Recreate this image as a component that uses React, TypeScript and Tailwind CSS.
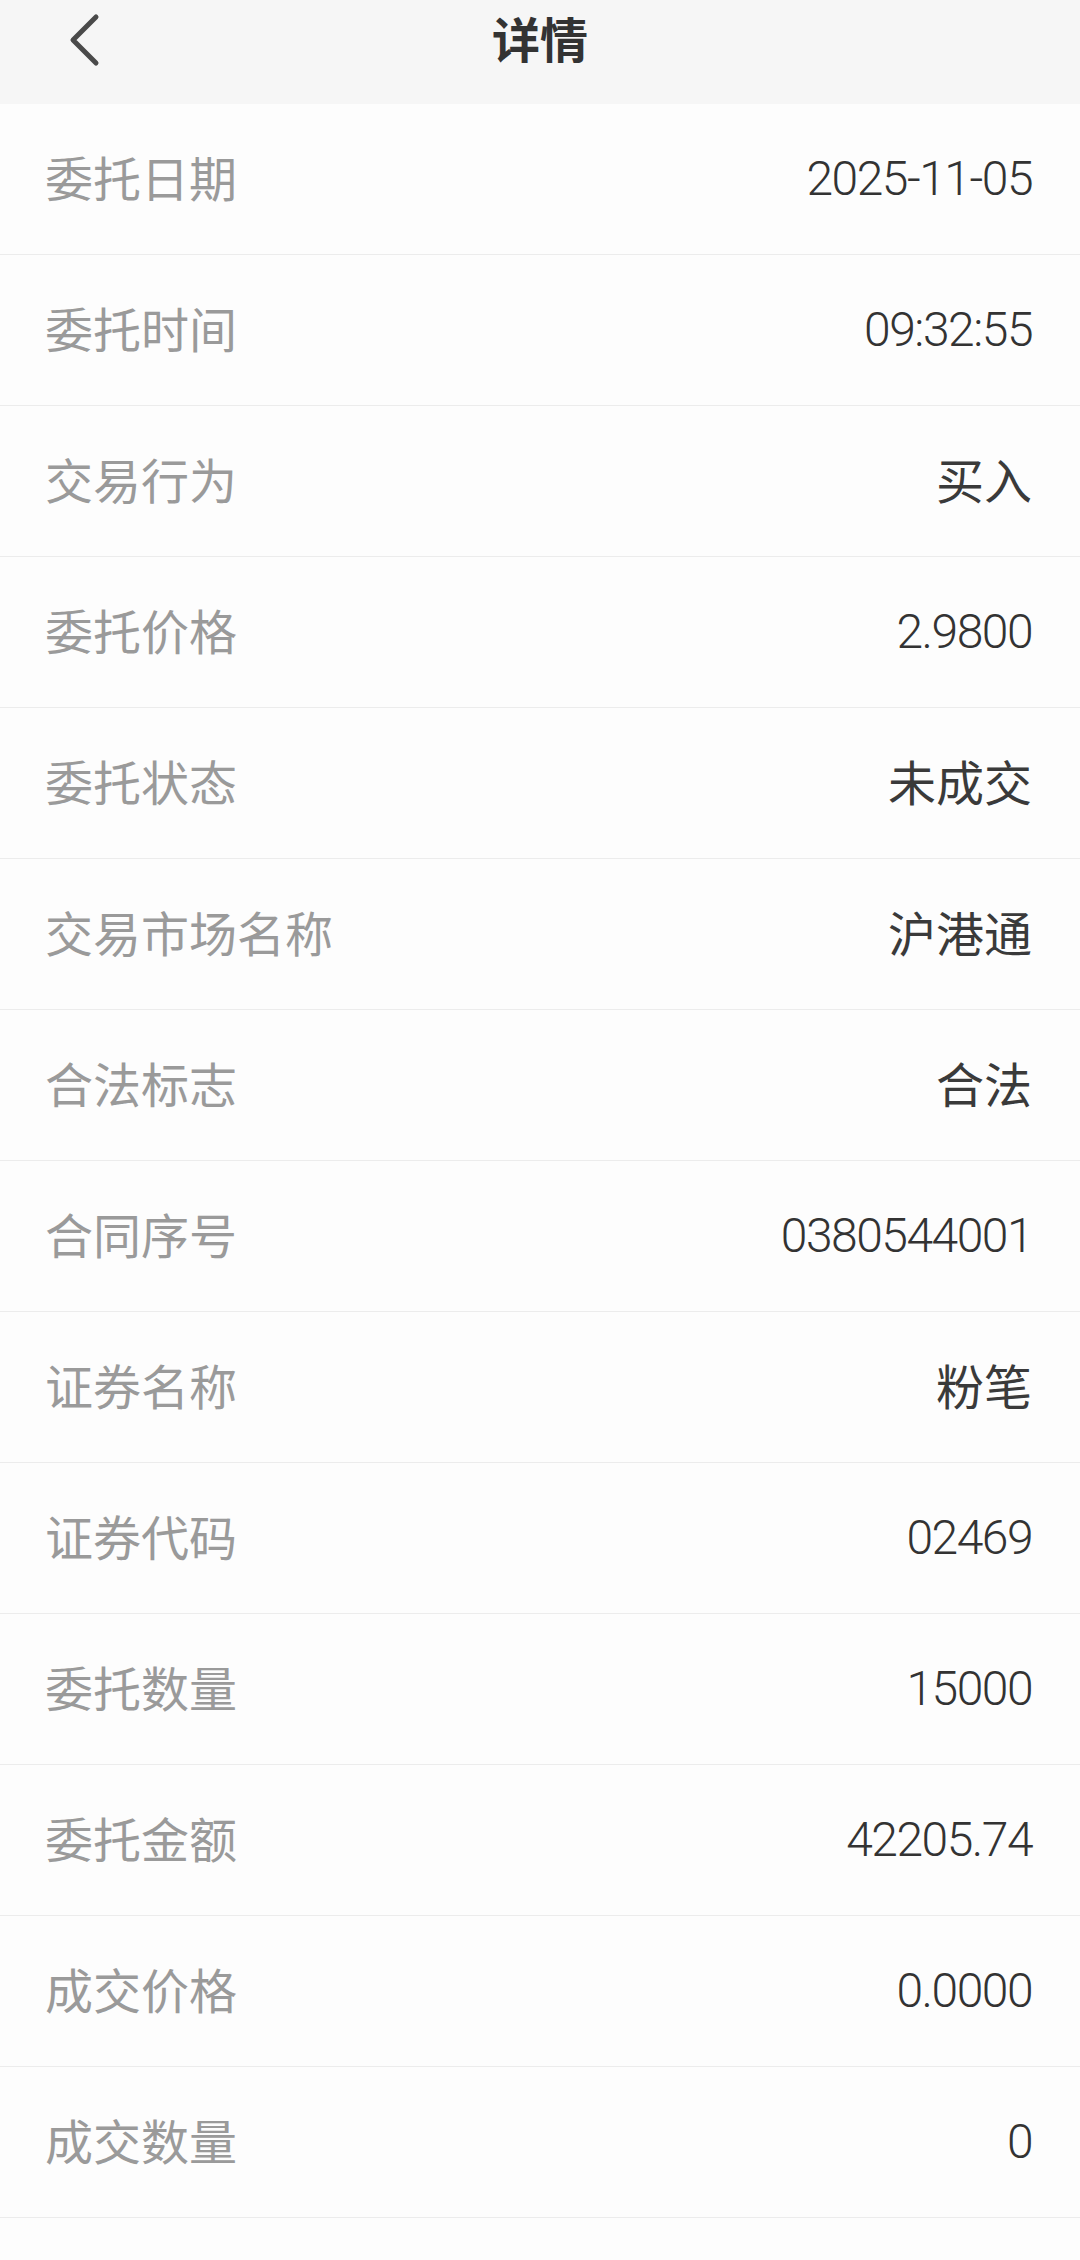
import React from "react";

const rows: [string, string][] = [
  ["委托日期", "2025-11-05"],
  ["委托时间", "09:32:55"],
  ["交易行为", "买入"],
  ["委托价格", "2.9800"],
  ["委托状态", "未成交"],
  ["交易市场名称", "沪港通"],
  ["合法标志", "合法"],
  ["合同序号", "0380544001"],
  ["证券名称", "粉笔"],
  ["证券代码", "02469"],
  ["委托数量", "15000"],
  ["委托金额", "42205.74"],
  ["成交价格", "0.0000"],
  ["成交数量", "0"],
];

const isCjk = (s: string) => /[\u4e00-\u9fff]/.test(s);

export default function App() {
  return (
    <div
      className="w-[1080px] min-h-[2260px] bg-[#fdfdfd]"
      style={{ fontFamily: '"Roboto", "Noto Sans CJK SC", sans-serif' }}
    >
      <header className="relative h-[104px] bg-[#f6f6f6] flex items-start justify-center">
        <button className="absolute left-[60px] top-[6px] w-[48px] h-[64px] flex items-center justify-center">
          <svg width="40" height="60" viewBox="0 0 40 60">
            <path
              d="M32 9 L9 32 L32 55"
              fill="none"
              stroke="#4a4a4a"
              strokeWidth="5"
              strokeLinecap="round"
              strokeLinejoin="round"
            />
          </svg>
        </button>
        <h1
          className="mt-[7px] text-[48px] leading-[60px] font-bold text-[#333333]"
          style={{ fontFamily: '"Noto Sans CJK SC", sans-serif' }}
        >
          详情
        </h1>
      </header>
      <div>
        {rows.map(([label, value]) => (
          <div
            key={label}
            className="h-[151px] border-b border-[#ececec] flex items-center justify-between pl-[45px] pr-[48px]"
          >
            <span
              className="text-[48px] leading-[60px] text-[#9a9a9a] -translate-y-[3px]"
              style={{ fontFamily: '"Noto Sans CJK SC", sans-serif' }}
            >
              {label}
            </span>
            {isCjk(value) ? (
              <span
                className="text-[48px] leading-[60px] text-[#3a3a3a] -translate-y-[3px]"
                style={{ fontFamily: '"Noto Sans CJK SC", sans-serif' }}
              >
                {value}
              </span>
            ) : (
              <span className="text-[48px] leading-[60px] font-light text-[#333333] tracking-[-1.5px]">
                {value}
              </span>
            )}
          </div>
        ))}
      </div>
    </div>
  );
}
